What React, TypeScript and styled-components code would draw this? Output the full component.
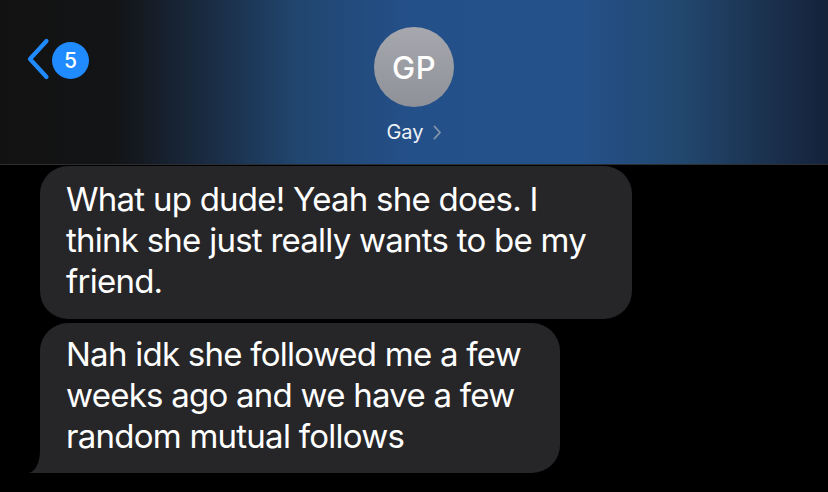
import styled, { createGlobalStyle } from 'styled-components'

const GlobalStyle = createGlobalStyle`
  html, body {
    margin: 0;
    padding: 0;
    background: #000;
  }
  body {
    font-family: Inter, "Noto Sans", "Liberation Sans", sans-serif;
    -webkit-font-smoothing: antialiased;
  }
`

const Screen = styled.div`
  width: 828px;
  height: 492px;
  overflow: hidden;
  background: #000;
  display: flex;
  flex-direction: column;
`

const Header = styled.header`
  position: relative;
  height: 165px;
  flex-shrink: 0;
  border-bottom: 1px solid #2b2d31;
  background: linear-gradient(
    to right,
    #121212 0%,
    #131416 14%,
    #1a2b42 25%,
    #21466f 36%,
    #24508a 50%,
    #25518a 70%,
    #22486f 82%,
    #1b3250 92%,
    #15223a 100%
  );
  display: flex;
  flex-direction: column;
  align-items: center;
  padding-top: 27px;
  box-sizing: border-box;
`

const BackButton = styled.div`
  position: absolute;
  left: 26px;
  top: 38px;
  display: flex;
  align-items: center;
  gap: 2px;
`

const Badge = styled.div`
  width: 37px;
  height: 37px;
  border-radius: 50%;
  background: #1f8bff;
  color: #fff;
  font-size: 21px;
  font-weight: 500;
  display: flex;
  align-items: center;
  justify-content: center;
  margin-top: 3px;
`

const Avatar = styled.div`
  width: 80px;
  height: 80px;
  border-radius: 50%;
  background: linear-gradient(to bottom, #a6a8ae, #8f9198);
  color: #fff;
  font-size: 31px;
  font-weight: 500;
  letter-spacing: 0.5px;
  display: flex;
  align-items: center;
  justify-content: center;
`

const ContactName = styled.div`
  margin-top: 13px;
  display: flex;
  align-items: center;
  gap: 9px;
  color: #eef2f7;
  font-size: 20px;
`

const Thread = styled.main`
  display: flex;
  flex-direction: column;
  align-items: flex-start;
  gap: 4px;
  padding: 1px 0 0 40px;
`

const Bubble = styled.div<{ $width: number; $tail?: boolean }>`
  position: relative;
  width: ${p => p.$width}px;
  box-sizing: border-box;
  background: #262629;
  color: #fff;
  border-radius: 28px;
  padding: 13px 20px 17px 26px;
  font-size: 33px;
  line-height: 41px;
  letter-spacing: -0.75px;

  ${p =>
    p.$tail &&
    `
    padding-top: 11px;
    padding-bottom: 16px;
    &::before {
      content: '';
      position: absolute;
      left: -12px;
      bottom: 0;
      width: 40px;
      height: 28px;
      background: #262629;
      border-bottom-left-radius: 3px 2px;
    }
    &::after {
      content: '';
      position: absolute;
      left: -20px;
      bottom: 0;
      width: 20px;
      height: 30px;
      background: #000;
      border-bottom-right-radius: 12px 22px;
    }
  `}
`

const Line = styled.span`
  display: block;
  position: relative;
  z-index: 1;
  white-space: nowrap;
`

export default function App() {
  return (
    <Screen>
      <GlobalStyle />
      <Header>
        <BackButton>
          <svg width="24" height="42" viewBox="0 0 24 42">
            <path
              d="M20.5 3 L4 21 L20.5 39"
              fill="none"
              stroke="#1f8bff"
              strokeWidth="4.2"
              strokeLinecap="round"
              strokeLinejoin="round"
            />
          </svg>
          <Badge>5</Badge>
        </BackButton>
        <Avatar>GP</Avatar>
        <ContactName>
          Gay
          <svg width="9" height="15" viewBox="0 0 9 15">
            <path
              d="M1.5 1.5 L7 7.5 L1.5 13.5"
              fill="none"
              stroke="#8797ab"
              strokeWidth="1.8"
              strokeLinecap="round"
              strokeLinejoin="round"
            />
          </svg>
        </ContactName>
      </Header>
      <Thread>
        <Bubble $width={592}>
          <Line>What up dude! Yeah she does. I</Line>
          <Line>think she just really wants to be my</Line>
          <Line>friend.</Line>
        </Bubble>
        <Bubble $width={520} $tail>
          <Line>Nah idk she followed me a few</Line>
          <Line>weeks ago and we have a few</Line>
          <Line>random mutual follows</Line>
        </Bubble>
      </Thread>
    </Screen>
  )
}
